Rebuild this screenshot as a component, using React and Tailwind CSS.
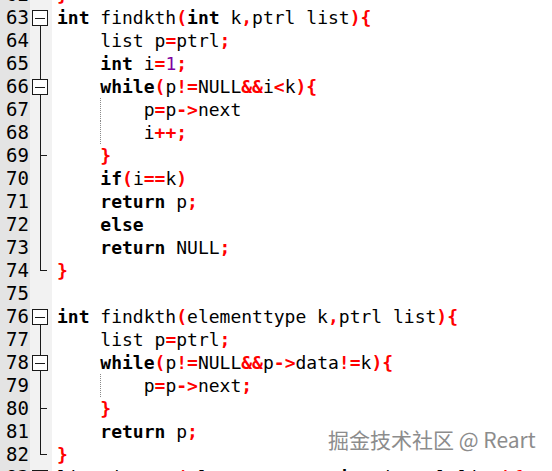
import React from 'react';

// token kinds: k = keyword, t = plain, o = operator, n = number
const lines = [
    { n: 62, ind: 0, fold: 'end', toks: [['o', '}']] },
    { n: 63, ind: 0, fold: 'box', toks: [['k', 'int'], ['t', ' findkth'], ['o', '('], ['k', 'int'], ['t', ' k'], ['o', ','], ['t', 'ptrl list'], ['o', '){']] },
    { n: 64, ind: 4, fold: 'mid', toks: [['t', 'list p'], ['o', '='], ['t', 'ptrl'], ['o', ';']] },
    { n: 65, ind: 4, fold: 'mid', toks: [['k', 'int'], ['t', ' i'], ['o', '='], ['n', '1'], ['o', ';']] },
    { n: 66, ind: 4, fold: 'nest', toks: [['k', 'while'], ['o', '('], ['t', 'p'], ['o', '!='], ['t', 'NULL'], ['o', '&&'], ['t', 'i'], ['o', '<'], ['t', 'k'], ['o', '){']] },
    { n: 67, ind: 8, fold: 'mid', guide: true, toks: [['t', 'p'], ['o', '='], ['t', 'p'], ['o', '->'], ['t', 'next']] },
    { n: 68, ind: 8, fold: 'mid', guide: true, toks: [['t', 'i'], ['o', '++;']] },
    { n: 69, ind: 4, fold: 'tick', toks: [['o', '}']] },
    { n: 70, ind: 4, fold: 'mid', toks: [['k', 'if'], ['o', '('], ['t', 'i'], ['o', '=='], ['t', 'k'], ['o', ')']] },
    { n: 71, ind: 4, fold: 'mid', toks: [['k', 'return'], ['t', ' p'], ['o', ';']] },
    { n: 72, ind: 4, fold: 'mid', toks: [['k', 'else']] },
    { n: 73, ind: 4, fold: 'mid', toks: [['k', 'return'], ['t', ' NULL'], ['o', ';']] },
    { n: 74, ind: 0, fold: 'end', toks: [['o', '}']] },
    { n: 75, ind: 0, fold: null, toks: [] },
    { n: 76, ind: 0, fold: 'box', toks: [['k', 'int'], ['t', ' findkth'], ['o', '('], ['t', 'elementtype k'], ['o', ','], ['t', 'ptrl list'], ['o', '){']] },
    { n: 77, ind: 4, fold: 'mid', toks: [['t', 'list p'], ['o', '='], ['t', 'ptrl'], ['o', ';']] },
    { n: 78, ind: 4, fold: 'nest', toks: [['k', 'while'], ['o', '('], ['t', 'p'], ['o', '!='], ['t', 'NULL'], ['o', '&&'], ['t', 'p'], ['o', '->'], ['t', 'data'], ['o', '!='], ['t', 'k'], ['o', '){']] },
    { n: 79, ind: 8, fold: 'mid', guide: true, toks: [['t', 'p'], ['o', '='], ['t', 'p'], ['o', '->'], ['t', 'next'], ['o', ';']] },
    { n: 80, ind: 4, fold: 'tick', toks: [['o', '}']] },
    { n: 81, ind: 4, fold: 'mid', toks: [['k', 'return'], ['t', ' p'], ['o', ';']] },
    { n: 82, ind: 0, fold: 'end', toks: [['o', '}']] },
    { n: 83, ind: 0, fold: 'box', toks: [['t', 'list insert'], ['o', '('], ['t', 'elementtype x'], ['o', ','], ['k', 'int'], ['t', ' i'], ['o', ','], ['t', 'ptrl list'], ['o', '){']] },
];

const tokClass = {
    k: 'font-bold text-black',
    t: 'text-black',
    o: 'font-bold text-[#ff0000]',
    n: 'text-[#8000a0]',
};

function FoldMark({ type }) {
    const c = '#1a1a1a';
    return (
        <svg width="22" height="23" viewBox="0 0 22 23" className="block">
            {(type === 'box' || type === 'nest') && (
                <>
                    {type === 'nest' && <line x1="10.5" y1="0" x2="10.5" y2="4" stroke={c} />}
                    <rect x="2.5" y="4.5" width="15" height="15" fill="#fff" stroke={c} />
                    <line x1="5" y1="12.5" x2="15" y2="12.5" stroke={c} />
                    <line x1="10.5" y1="20" x2="10.5" y2="23" stroke={c} />
                </>
            )}
            {type === 'mid' && <line x1="10.5" y1="0" x2="10.5" y2="23" stroke={c} />}
            {type === 'tick' && (
                <>
                    <line x1="10.5" y1="0" x2="10.5" y2="23" stroke={c} />
                    <line x1="10.5" y1="11.5" x2="17" y2="11.5" stroke={c} />
                </>
            )}
            {type === 'end' && (
                <>
                    <line x1="10.5" y1="0" x2="10.5" y2="12" stroke={c} />
                    <line x1="10.5" y1="11.5" x2="17" y2="11.5" stroke={c} />
                </>
            )}
        </svg>
    );
}

function CodeLine({ line }) {
    return (
        <div className="flex h-[23px]">
            {/* line number */}
            <div className="w-[30px] shrink-0 bg-[#e4e4e4] pr-[1px] text-right text-[19px] leading-[23px] text-black">
                {line.n}
            </div>
            {/* fold margin */}
            <div className="w-[22px] shrink-0 bg-[#f2f2f2]">
                {line.fold && <FoldMark type={line.fold} />}
            </div>
            {/* code */}
            <div className="relative flex-1 whitespace-pre pl-[5px] leading-[23px]">
                {line.guide && (
                    <span className="absolute left-[48px] top-0 h-[23px] border-l border-dotted border-[#8a8a8a]"></span>
                )}
                <span>{' '.repeat(line.ind)}</span>
                {line.toks.map(([kind, text], i) => (
                    <span key={i} className={tokClass[kind]}>{text}</span>
                ))}
            </div>
        </div>
    );
}

export default function App() {
    return (
        <div className="relative h-[471px] w-[552px] overflow-hidden bg-white font-['DejaVu_Sans_Mono',monospace] text-[18px]">
            <div className="-mt-[17px] flex flex-col">
                {lines.map((line) => (
                    <CodeLine key={line.n} line={line} />
                ))}
            </div>

            {/* watermark */}
            <div className="absolute left-[328px] top-[425px] font-['Noto_Sans_CJK_SC','Noto_Sans',sans-serif] text-[21px] leading-[28px] text-[#8c8c8c] [text-shadow:0_0_2px_#fff,1px_1px_1px_#fff]">
                掘金技术社区 @ Reart
            </div>
        </div>
    );
}
